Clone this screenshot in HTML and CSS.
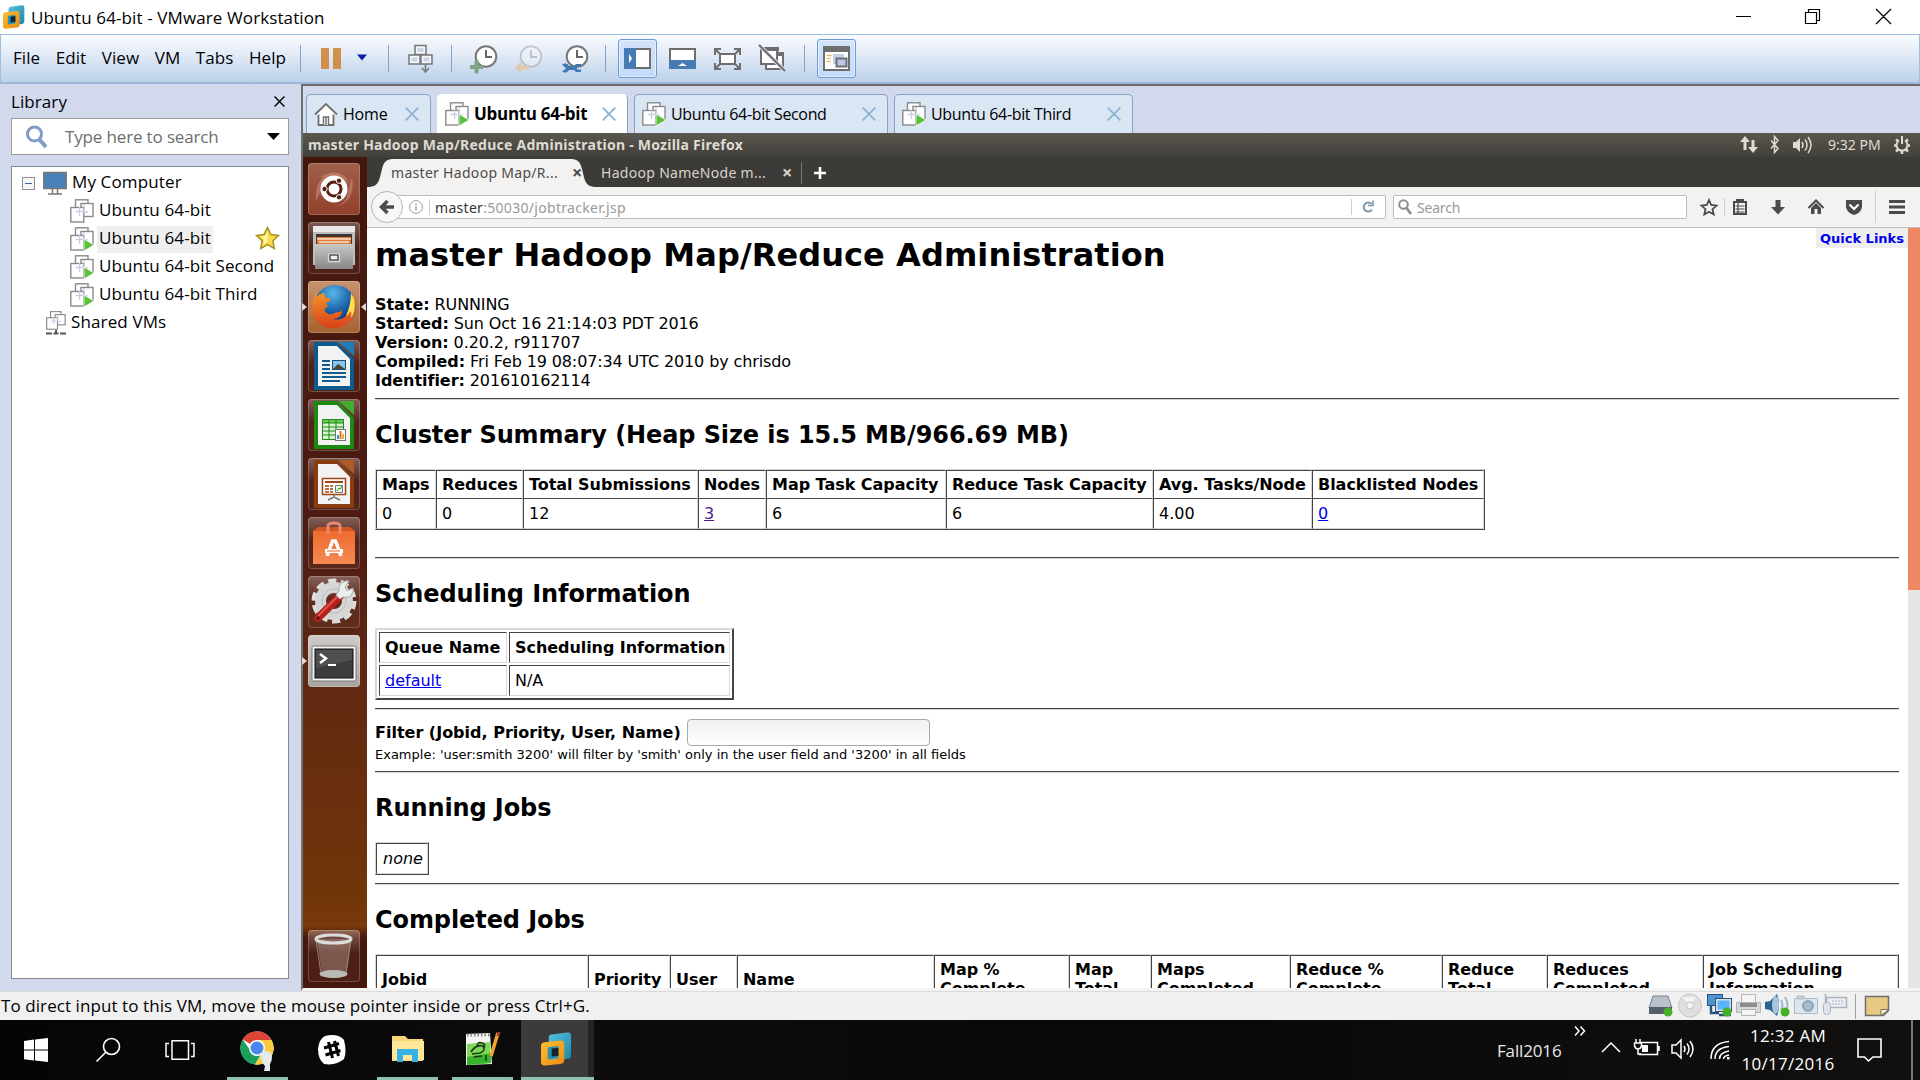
FILE: index.html
```html
<!DOCTYPE html>
<html lang="en">
<head>
<meta charset="utf-8">
<title>Ubuntu 64-bit - VMware Workstation</title>
<link rel="stylesheet" href="styles.css">
</head>
<body>
<svg class="defs" width="0" height="0">
  <defs>
    <linearGradient id="steel" x1="0" y1="0" x2="0" y2="1"><stop offset="0" stop-color="#c9c9c9"/><stop offset="1" stop-color="#868686"/></linearGradient>
    <linearGradient id="bag" x1="0" y1="0" x2="0" y2="1"><stop offset="0" stop-color="#ee6a2c"/><stop offset="1" stop-color="#f58a55"/></linearGradient>
    <linearGradient id="cyan" x1="0" y1="0" x2="1" y2="1"><stop offset="0" stop-color="#55c3e0"/><stop offset="1" stop-color="#1e86a8"/></linearGradient>
    <linearGradient id="amber" x1="0" y1="0" x2="1" y2="1"><stop offset="0" stop-color="#fdc02f"/><stop offset="1" stop-color="#ee8a15"/></linearGradient>
    <radialGradient id="globe" cx=".45" cy=".2" r=".8"><stop offset="0" stop-color="#56b6e8"/><stop offset=".6" stop-color="#15569d"/><stop offset="1" stop-color="#0b2d66"/></radialGradient>
    <linearGradient id="fox" x1="0" y1="0" x2="0" y2="1"><stop offset="0" stop-color="#f5952a"/><stop offset="1" stop-color="#d9401a"/></linearGradient>
    <symbol id="vmware" viewBox="0 0 32 40">
      <path d="M11 3 27 .500Q31 0 31 4V27Q31 31 28 31.500L12 34Q8 34 8 30V7Q8 3.500 11 3z" fill="url(#cyan)"/>
      <path d="M4 12 20 10Q24 10 24 14V33Q24 37 20 37.500L4 39.500Q0 39.500 0 36V16Q0 12.500 4 12z" fill="url(#amber)"/>
      <path d="M7 18 18 16.500V31L7 32.500z" fill="#2a93b4"/><path d="M11 19.500 18 18.500V28l-7 1z" fill="#12252c"/>
    </symbol>
    <symbol id="vm" viewBox="0 0 24 24">
      <g fill="#fff" stroke="#8a8a8a" stroke-width="1.400"><rect x="5.500" y=".8" width="12.500" height="14"/><rect x="11" y="4.500" width="12" height="13"/><rect x=".8" y="8.500" width="13" height="14.500"/></g>
      <path d="M5.500 12.500h8M9.500 8v9M14 5v8h4" fill="none" stroke="#c3d0e6" stroke-width="1.300"/>
    </symbol>
    <symbol id="vmrun" viewBox="0 0 24 24"><use href="#vm"/><path d="M14 12l10 6-10 6z" fill="#5bbf3c" stroke="#fff" stroke-width=".8"/></symbol>
    <symbol id="x" viewBox="0 0 14 14"><path d="M.7.7l12.600 12.600M13.300.7.7 13.300" fill="none" stroke="currentColor" stroke-width="1.800"/></symbol>
    <symbol id="clock" viewBox="0 0 28 28"><circle cx="16" cy="11.500" r="10.300" fill="#fff" stroke="#777" stroke-width="2"/><path d="M16 5v7h6" fill="none" stroke="#666" stroke-width="2"/></symbol>
  </defs>
</svg>

<header class="titlebar">
  <svg class="appicon" width="22" height="24" viewBox="0 0 32 40" preserveAspectRatio="none"><use href="#vmware" width="32" height="40"/></svg>
  <span class="ui title">Ubuntu 64-bit - VMware Workstation</span>
  <svg class="winctl" width="160" height="34" fill="none" stroke="#000" stroke-width="1.200"><path d="M1 16.500h15M70.500 12.500h11v11h-11zM73.500 12.500v-3h11v11h-3M141 9l15 15M156 9l-15 15"/></svg>
</header>

<div class="toolbar ui">
  <nav class="menus"><span>File</span><span>Edit</span><span>View</span><span>VM</span><span>Tabs</span><span>Help</span></nav>
  <i class="sep"></i>
  <svg width="48" height="40" style="margin-left:19px"><path d="M1 9h8v21H1zM13 9h8v21h-8z" fill="#d2914b"/><path d="M37 15.500h10l-5 6z" fill="#0a1fa8"/></svg>
  <i class="sep" style="margin-left:20px"></i>
  <svg width="25" height="40" style="margin-left:19px" fill="#f4f7fd" stroke="#7b7b7b" stroke-width="1.600"><rect x="7" y="6.500" width="11" height="9"/><rect x="1" y="16" width="11" height="9"/><rect x="13" y="16" width="11" height="9"/><path d="M17.500 25v7M14 29l3.500 4 3.500-4" fill="none"/><path d="M9.500 9h6v4h-6zM3.500 18.500h6v4h-6zM15.500 18.500h6v4h-6z" fill="#c9d6ea" stroke="none"/></svg>
  <i class="sep" style="margin-left:18px"></i>
  <svg width="28" height="28" style="margin-left:18px"><use href="#clock"/><path d="M0 22h13M6.500 15.500v13" stroke="#83a389" stroke-width="4"/></svg>
  <svg width="28" height="28" style="margin-left:17px"><use href="#clock" opacity=".3"/><path d="M0 22.500 6 17v3.500h8v4H6V28z" fill="#e0c8ae"/></svg>
  <svg width="28" height="28" style="margin-left:18px"><use href="#clock"/><path d="M1 19.500a4.500 4.500 0 0 1 7 1.500h5l2-2h5v2.500h-4v3h4V27h-5l-2-2H8a4.500 4.500 0 0 1-7 1.500l4-3z" fill="#3f78b5"/></svg>
  <i class="sep" style="margin-left:16px"></i>
  <span class="pressed" style="margin-left:12px"><svg width="27" height="21"><rect x="1" y="1" width="25" height="19" fill="#fff" stroke="#6e6e6e" stroke-width="2"/><path d="M0 0h12v21H0z" fill="#467bb3"/><path d="M5 6l3 4.500L5 15z" fill="#fff"/></svg></span>
  <svg width="27" height="21" style="margin-left:12px"><rect x="1" y="1" width="25" height="19" fill="#fff" stroke="#6e6e6e" stroke-width="2"/><path d="M0 12h27v9H0z" fill="#467bb3"/><path d="M9 18l4.500-3 4.500 3z" fill="#fff"/></svg>
  <svg width="27" height="22" style="margin-left:18px" fill="none" stroke="#6e6e6e" stroke-width="2"><rect x="6" y="6" width="15" height="10" fill="#fff"/><path d="M1 7V1h6M20 1h6v6M26 15v6h-6M7 21H1v-6M1 1l5 5M26 1l-5 5M26 21l-5-5M1 21l5-5"/></svg>
  <svg width="27" height="27" style="margin-left:18px" fill="#fff" stroke="#6e6e6e" stroke-width="2"><path d="M7 8h17v16H7z"/><path d="M2 5h16v14H2z"/><path d="M2 2h18v4H2zM18 7h7v4h-7z" fill="#6e6e6e" stroke="none"/><path d="M0 0l26 26" stroke="#dfe7f5" stroke-width="4"/><path d="M0 0l26 26" stroke-width="2"/></svg>
  <i class="sep" style="margin-left:18px"></i>
  <span class="pressed" style="margin-left:12px"><svg width="27" height="25"><rect x="1" y="1" width="25" height="23" fill="#fff" stroke="#6e6e6e" stroke-width="2"/><path d="M0 0h27v6H0z" fill="#6e6e6e"/><path d="M3.500 9.500h5M3.500 12.500h4M3.500 15.500h4" stroke="#e4bd6c" stroke-width="1.500"/><path d="M10 8h11v10H10z" fill="#c3d0ea"/><path d="M13.500 12.500h10v8h-10z" fill="#b9c8e6" stroke="#6e6e6e" stroke-width="2"/></svg></span>
</div>

<main class="workspace">
  <aside class="library ui">
    <div class="libhead"><span>Library</span><svg width="11" height="11"><use href="#x"/></svg></div>
    <div class="searchbox">
      <svg width="24" height="24" fill="none" stroke="#7f9bc6"><circle cx="9.500" cy="9" r="7" stroke-width="3"/><path d="M14 14l7 8" stroke-width="4"/></svg>
      <span>Type here to search</span>
      <svg width="13" height="8"><path d="M0 0h13L6.500 7z"/></svg>
    </div>
    <div class="tree">
      <div class="node"><svg width="13" height="13" class="expander"><rect x=".5" y=".5" width="12" height="12" fill="#f7f7f7" stroke="#8f8f8f"/><path d="M3 6.500h7" stroke="#3f5fa8"/></svg>
        <svg width="24" height="24"><rect x=".8" y="1.500" width="22.400" height="16" fill="#4a80b8" stroke="#777" stroke-width="1.500"/><path d="M9.500 18v5M14.500 18v5M5 23h14" stroke="#777" stroke-width="1.500"/></svg><span>My Computer</span></div>
      <div class="node child"><svg width="24" height="24"><use href="#vm"/></svg><span>Ubuntu 64-bit</span></div>
      <div class="node child picked"><svg width="24" height="24"><use href="#vmrun"/></svg><span>Ubuntu 64-bit</span>
        <svg class="star" width="25" height="24"><path d="M12.500 1.500l3.400 7 7.600 1-5.600 5.300 1.400 7.700-6.800-3.800-6.800 3.800 1.400-7.700L1.500 9.500l7.600-1z" fill="#f6de4b" stroke="#a98f20" stroke-width="1.500"/><path d="M12.500 5v11l-4 2.500 1-5L6 10.500l4.500-.8z" fill="#fff7ae"/></svg></div>
      <div class="node child"><svg width="24" height="24"><use href="#vmrun"/></svg><span>Ubuntu 64-bit Second</span></div>
      <div class="node child"><svg width="24" height="24"><use href="#vmrun"/></svg><span>Ubuntu 64-bit Third</span></div>
      <div class="node shared"><svg width="20" height="24"><svg width="20" height="19" preserveAspectRatio="none" viewBox="0 0 24 24"><use href="#vm" width="24" height="24"/></svg><path d="M10 19v3M0 22.500h6M7.500 22.500h5M14 22.500h6" stroke="#555" stroke-width="2"/></svg><span>Shared VMs</span></div>
    </div>
  </aside>

  <section class="console">
    <div class="vmtabs ui">
      <div class="vmtab home"><svg width="24" height="24" fill="#fff" stroke="#6e6e6e" stroke-width="1.800"><path d="M4.500 12v11h15V12"/><path d="M1 12.500 12 2l11 10.500"/><path d="M9.500 23v-8h5v8M12 15v8" stroke-width="1.400"/></svg><span>Home</span><svg class="close" width="14" height="14"><use href="#x"/></svg></div>
      <div class="vmtab active"><svg width="24" height="24"><use href="#vmrun"/></svg><span>Ubuntu 64-bit</span><svg class="close" width="14" height="14"><use href="#x"/></svg></div>
      <div class="vmtab second"><svg width="24" height="24"><use href="#vmrun"/></svg><span>Ubuntu 64-bit Second</span><svg class="close" width="14" height="14"><use href="#x"/></svg></div>
      <div class="vmtab third"><svg width="24" height="24"><use href="#vmrun"/></svg><span>Ubuntu 64-bit Third</span><svg class="close" width="14" height="14"><use href="#x"/></svg></div>
    </div>

    <div class="panel ubuntu">
      <span class="wintitle">master Hadoop Map/Reduce Administration - Mozilla Firefox</span>
      <svg width="76" height="22" fill="none" stroke="#dfdbd2" stroke-width="1.500"><path d="M5 16V6M13 6v9" stroke-width="3"/><path d="M0 8l5-6 5 6zM8 13l5 6 5-6z" fill="#dfdbd2" stroke="none"/><path d="M31 6.500l7 8-3.500 4v-16l3.500 4-7 8"/><path d="M53 8v6h3l4 4V4l-4 4z" fill="#dfdbd2" stroke="none"/><path d="M62 8q2 3 0 6M65 5.500q4 5.500 0 11M68 3q6 8 0 16"/></svg>
      <span class="time">9:32 PM</span>
      <svg class="gear" width="18" height="18" fill="none" stroke="#dfdbd2"><path d="M6 4.500a5.500 5.500 0 1 0 6 0" stroke-width="2"/><path d="M9 0v8" stroke-width="2"/><path d="M1 9.500h2M15 9.500h2M9 15v3M3 3.500l2 1.500M15 3.500 13 5M3 15.500l2-2M15 15.500l-2-2" stroke-width="2.500"/></svg>
    </div>

    <div class="desktop">
      <div class="launcher">
        <div class="tile dash"><svg width="52" height="52"><path d="M8 38Q6 12 28 10 14 14 14 26M44 14Q48 40 26 44 40 40 40 28M12 14Q34 2 42 22 34 12 26 13" fill="#d9a08a" opacity=".45"/><circle cx="26" cy="26" r="13.500" fill="#fff"/><circle cx="26" cy="26" r="7" fill="none" stroke="#5a1f12" stroke-width="3"/><g fill="#5a1f12" stroke="#fff" stroke-width="1"><circle cx="16.500" cy="26" r="2.700"/><circle cx="31" cy="17.700" r="2.700"/><circle cx="31" cy="34.300" r="2.700"/></g></svg></div>
        <div class="tile"><svg width="52" height="52"><path d="M5 4h42v39H5z" fill="#bdbdbd"/><path d="M5 4h42v6H5z" fill="#e9e9e9"/><path d="M8 12h36v12H8z" fill="#3c3532"/><path d="M9 15h34v8H9z" fill="#e07a3c"/><path d="M9 17h34M11 20h30" stroke="#f8e2c8" stroke-width="1.500"/><path d="M7 22h38v25H7z" fill="url(#steel)"/><rect x="19.500" y="30.500" width="13" height="10" rx="2" fill="#d8d8d8" stroke="#a9a9a9"/><rect x="22" y="33" width="8" height="5" fill="#eee" stroke="#333" stroke-width="1.200"/></svg></div>
        <div class="tile ff run front"><svg width="52" height="52"><circle cx="27" cy="25" r="21" fill="url(#globe)"/><path d="M45 13c4 8 4 18-2 26-5 6-13 9-20 8C11 46 4 37 4 26c0-6 2-11 5-15v5c2-3 5-4 8-4-1 2 0 4 1 5h4c1 2-1 4-4 5l2 4c-3 0-4 2-3 4 2 4 8 4 11 1 4 1 5-1 6-2 1 5-4 9-9 9 12 3 20-7 20-25z" fill="url(#fox)"/><path d="M43 12c5 8 5 18 0 25 1-5 0-6-1-7-1 3-2 4-4 5 3-7 5-14 5-23z" fill="#fde04a"/></svg></div>
        <div class="tile"><svg width="52" height="52"><path d="M6 2h23l17 17v31H6z" fill="#0d5a8c"/><path d="M31 2h15v14z" fill="#1f7db8"/><path d="M10 6h19l13 13v27H10z" fill="#f2f2f2"/><path d="M14 21h8M14 25h8M14 29h8M14 33h24M14 37h24M14 41h18" stroke="#0f5c8e" stroke-width="2"/><rect x="24.500" y="20.500" width="13" height="9" fill="#8cc4ea" stroke="#0f4f7b"/><path d="M25 29l5-5 3 2 4 3z" fill="#4c4330"/></svg></div>
        <div class="tile"><svg width="52" height="52"><path d="M6 2h23l17 17v31H6z" fill="#1c8a10"/><path d="M31 2h15v14z" fill="#3fae2a"/><path d="M10 6h19l13 13v27H10z" fill="#f2f2f2"/><path d="M14 20h22v20H14z" fill="#d9f2cf"/><path d="M14 20h22v4H14z" fill="#6cc95a"/><path d="M14.500 20.500h21v20h-21zM14 24h22M14 28h22M14 32h22M14 36h22M21 20v20M28 20v20" stroke="#218a18" fill="none"/><rect x="27.500" y="30.500" width="10" height="11" fill="#fff" stroke="#777"/><path d="M30 40v-4" stroke="#3a8fd8" stroke-width="2"/><path d="M32.500 40v-8" stroke="#e8722c" stroke-width="2"/><path d="M35 40v-5" stroke="#e3b62f" stroke-width="2"/></svg></div>
        <div class="tile"><svg width="52" height="52"><path d="M6 2h23l17 17v31H6z" fill="#8a3c10"/><path d="M31 2h15v14z" fill="#b05a24"/><path d="M10 6h19l13 13v27H10z" fill="#f2f2f2"/><rect x="14.500" y="20.500" width="23" height="16" fill="#fff" stroke="#a04412" stroke-width="1.500"/><path d="M17 24h18" stroke="#a04412" stroke-width="2"/><path d="M17 28h4M17 31h4M17 34h4M22 28h3M22 31h3M22 34h3" stroke="#a04412" stroke-width="1.500"/><path d="M27.500 27.500h7v7h-7z" fill="#e8f5e4" stroke="#777"/><path d="M29 33l2-3 1 1 2-3" fill="none" stroke="#2a9a2a"/><path d="M26 37v3M20 42l6-3 6 3" stroke="#777" stroke-width="1.500" fill="none"/></svg></div>
        <div class="tile"><svg width="52" height="52"><path d="M5 14h42v33H5z" fill="url(#bag)"/><path d="M5 14l5-4h32l5 4z" fill="#d1561f"/><path d="M20 17V9q0-3 6-3t6 3v8" fill="none" stroke="#e9886a" stroke-width="3"/><path d="M19 39l5.500-15h3L33 39" fill="none" stroke="#fff" stroke-width="3.500"/><path d="M17 34h18" stroke="#fff" stroke-width="4"/><path d="M19 34h13" stroke="#ef7a40" stroke-width="1.200"/></svg></div>
        <div class="tile"><svg width="52" height="52"><circle cx="26" cy="25" r="20" fill="none" stroke="#dcdcdc" stroke-width="5" stroke-dasharray="8 4.560"/><circle cx="26" cy="25" r="13.500" fill="none" stroke="#d6d6d6" stroke-width="11"/><circle cx="26" cy="25" r="12" fill="none" stroke="#bcbcbc"/><path d="M10 42 33 19" stroke="#b4201e" stroke-width="8" stroke-linecap="round"/><path d="M10 40 32 18" stroke="#e0524a" stroke-width="2"/><circle cx="10" cy="42" r="1.500" fill="#4d0c0c"/><path d="M31 15c-1-6 4-11 10-10l-4 6 2 4 6-3c1 6-4 11-10 9l-3 2-4-4z" fill="#eee" stroke="#aaa"/></svg></div>
        <div class="tile term run"><svg width="52" height="52"><rect x="4" y="11" width="44" height="35" rx="1.500" fill="#f3f3f3" stroke="#777"/><rect x="7" y="14" width="38" height="29" fill="#3c3c3c" stroke="#111"/><path d="M8 15h36v10L8 33z" fill="#5b5b5b" opacity=".6"/><path d="M12 19l6 4.500-6 4.500" fill="none" stroke="#fff" stroke-width="2.500"/><path d="M20 30h8" stroke="#fff" stroke-width="2"/></svg></div>
        <div class="tile trash"><svg width="52" height="52"><path d="M9 9h34l-5 36q-12 5-24 0z" fill="#c9b0a6" opacity=".38"/><ellipse cx="25.500" cy="44" rx="14" ry="4" fill="#bcbab4"/><ellipse cx="25.500" cy="9" rx="17.500" ry="4" fill="none" stroke="#dcdcda" stroke-width="3"/><path d="M8 10l5 34M43 10l-5 34" stroke="#c7b8b2" opacity=".6"/></svg></div>
      </div>

      <div class="firefox">
        <div class="fftabs ubuntu">
          <svg class="tabshape" width="230" height="30"><path d="M0 30C12 30 12 24 15 12 17 4 20 2 27 2H203C210 2 213 4 215 12 218 24 218 30 230 30z" fill="#f3f2f1"/></svg>
          <span class="t1">master Hadoop Map/R...</span><b class="c1">×</b>
          <span class="t2">Hadoop NameNode m...</span><b class="c2">×</b><i></i>
          <svg width="14" height="14"><path d="M7 1v12M1 7h12" stroke="#fff" stroke-width="2.600"/></svg>
        </div>
        <div class="ffnav ubuntu">
          <svg class="back" width="34" height="34"><circle cx="17" cy="17" r="15.500" fill="#f8f7f6" stroke="#b9b7b5"/><path d="M24 17H12M17.500 11l-6 6 6 6" fill="none" stroke="#4c4c4c" stroke-width="3.500"/></svg>
          <div class="url"><svg width="14" height="14" fill="none" stroke="#999"><circle cx="7" cy="7" r="6.400"/><path d="M7 6v4.500M7 3.500v1.400" stroke-width="1.400"/></svg><i></i><span><em>master</em>:50030/jobtracker.jsp</span><i class="rsep"></i><svg width="12" height="14" fill="none" stroke="#8297a8" stroke-width="2"><path d="M9.500 4A4.500 4.500 0 1 0 10 9.500"/><path d="M6 5.500h5V.5" stroke-width="1.600"/></svg></div>
          <div class="ffsearch"><svg width="14" height="17" fill="none" stroke="#8c8c8c"><circle cx="5.500" cy="5.500" r="4.300" stroke-width="2"/><path d="M8.500 9l4.500 6" stroke-width="2.600"/></svg><span>Search</span></div>
          <svg class="ffbtns" width="206" height="36" fill="none" stroke="#4a4a4a"><path d="M9 11l2.200 5 5.300.6-4 3.600 1.200 5.300L9 22.800l-4.700 2.700 1.200-5.300-4-3.600 5.300-.6z" stroke-width="1.800"/><path d="M24.500 9v18M175.500 2v32" stroke="#d0cecc"/><path d="M34 13h12v12H34z" stroke-width="2"/><path d="M36 10h8v4h-8z" fill="#4a4a4a" stroke="none"/><path d="M35.500 17h9M35.500 20h9M35.500 23h9M38 14v10" stroke-width="1.200"/><path d="M78 11v8" stroke-width="5"/><path d="M71 18h14l-7 7.500z" fill="#4a4a4a" stroke="none"/><path d="M108.500 19l7.500-7.500 7.500 7.500" stroke-width="2"/><path d="M111 19l5-5 5 5v6h-3.500v-5h-3v5H111z" fill="#4a4a4a" stroke="none"/><path d="M146 11h16v7q-1 6-8 8-7-2-8-8z" fill="#4a4a4a" stroke="none"/><path d="M149.500 15.500l4.500 4.500 4.500-4.500" stroke="#fff" stroke-width="2.200"/><path d="M189 12.500h16M189 18h16M189 23.500h16" stroke-width="2.800"/></svg>
        </div>

        <div class="viewport">
          <div class="page">
            <a class="quick">Quick Links</a>
            <h1>master Hadoop Map/Reduce Administration</h1>
            <div class="facts"><b>State:</b> RUNNING<br><b>Started:</b> Sun Oct 16 21:14:03 PDT 2016<br><b>Version:</b> 0.20.2, r911707<br><b>Compiled:</b> Fri Feb 19 08:07:34 UTC 2010 by chrisdo<br><b>Identifier:</b> 201610162114</div>
            <hr>
            <h2>Cluster Summary (Heap Size is 15.5 MB/966.69 MB)</h2>
            <table class="cluster">
              <colgroup><col class="w60"><col class="w87"><col class="w175"><col class="w68"><col class="w180"><col class="w207"><col class="w159"><col class="w172"></colgroup>
              <tr><th>Maps</th><th>Reduces</th><th>Total Submissions</th><th>Nodes</th><th>Map Task Capacity</th><th>Reduce Task Capacity</th><th>Avg. Tasks/Node</th><th>Blacklisted Nodes</th></tr>
              <tr><td>0</td><td>0</td><td>12</td><td><a class="visited">3</a></td><td>6</td><td>6</td><td>4.00</td><td><a>0</a></td></tr>
            </table>
            <hr class="after-cluster">
            <h2>Scheduling Information</h2>
            <table class="queues">
              <tr><th>Queue Name</th><th>Scheduling Information</th></tr>
              <tr><td><a>default</a></td><td>N/A</td></tr>
            </table>
            <hr>
            <div class="filter"><b>Filter (Jobid, Priority, User, Name)</b><input type="text"></div>
            <div class="example">Example: 'user:smith 3200' will filter by 'smith' only in the user field and '3200' in all fields</div>
            <hr>
            <h2>Running Jobs</h2>
            <table class="none"><tr><td><i>none</i></td></tr></table>
            <hr>
            <h2>Completed Jobs</h2>
            <table class="jobs">
              <colgroup><col class="w212"><col class="w82"><col class="w67"><col class="w197"><col class="w135"><col class="w82"><col class="w139"><col class="w152"><col class="w105"><col class="w156"><col class="w195"></colgroup>
              <tr><td>Jobid</td><td>Priority</td><td>User</td><td>Name</td><td>Map % Complete</td><td>Map Total</td><td>Maps Completed</td><td>Reduce % Complete</td><td>Reduce Total</td><td>Reduces Completed</td><td>Job Scheduling Information</td></tr>
            </table>
          </div>
          <div class="scroll"><div></div></div>
        </div>
      </div>
    </div>
  </section>
</main>

<footer class="status ui">
  <span>To direct input to this VM, move the mouse pointer inside or press Ctrl+G.</span>
  <svg width="242" height="27">
    <g><path d="M5 3h15l4 12H1z" fill="#b9c2cc" stroke="#77828e"/><path d="M1 14h23v7H1z" fill="#56606b"/><circle cx="20" cy="19" r="4.500" fill="#45b028"/></g>
    <g><circle cx="42" cy="12.500" r="11.500" fill="#dedee1" stroke="#c6c6cb"/><path d="M42 12.500 34 4h14z" fill="#f3f3f4"/><circle cx="42" cy="12.500" r="3.500" fill="#f4f4f4" stroke="#c4c4c8"/></g>
    <g stroke="#24557f"><rect x="59.500" y="1.500" width="15" height="11" fill="#4f94cf"/><rect x="68.500" y="6.500" width="14" height="11" fill="#5bb2ff" stroke="#ddd" stroke-width="2"/><rect x="67.500" y="5.500" width="16" height="13" fill="none"/><path d="M63 13v7h8M71 22h12" fill="none" stroke-width="2.500"/></g><circle cx="79" cy="19" r="4.500" fill="#45b028"/>
    <g stroke="#b4b4b8"><path d="M93.500 1.500h14v9h-14z" fill="#f4f4f4"/><path d="M88.500 9.500h24v10h-24z" fill="#d7d7da"/><path d="M92 10h17v4H92z" fill="#8d8d90" stroke="none"/><path d="M93.500 16.500h14v6h-14z" fill="#f4f4f4"/></g>
    <g><path d="M117 9l5-1 7-7q4 11 0 22l-7-6-5-1z" fill="#2f6294"/><ellipse cx="127.500" cy="12" rx="3.500" ry="9" fill="#a8c5e0"/><path d="M133 7q3 5 0 10M137 4q5 8 0 16" fill="none" stroke="#a6b8cf" stroke-width="2"/><circle cx="137" cy="19" r="4.500" fill="#45b028"/></g>
    <g stroke="#a9bccb"><path d="M146.500 5.500h23v15h-23z" fill="#dbe6ee"/><path d="M149 3h7v3h-7z" fill="#c5d3de"/><circle cx="160" cy="13" r="5" fill="#aabdcc" stroke="#8da3b5" stroke-width="2"/></g>
    <g stroke="#aab3bd"><path d="M178.500 4.500h20v10h-20z" fill="#eceff2" stroke-width="1.500"/><path d="M184 8h12M184 11h12" stroke-dasharray="2 1"/><path d="M177.500 1v8" stroke-width="1.500"/><rect x="175.500" y="9.500" width="7" height="12" rx="3" fill="#dfe4ea"/></g>
    <path d="M207.500 1v25" stroke="#a0a0a0"/><path d="M217.500 3.500h23v14l-5 5h-18z" fill="#e7ca80" stroke="#6f6f6f" stroke-width="1.500"/><path d="M233 22.500v-6h8z" fill="#fff1c8" stroke="#6f6f6f"/>
  </svg>
</footer>

<footer class="taskbar">
  <div class="apps">
    <svg class="a1" width="24" height="24" fill="#fff"><path d="M0 3l10-1.400v10H0zM11 1.500 24 0v11.600H11zM0 12.600h10v10L0 21.200zM11 12.600h13V24l-13-1.500z"/></svg>
    <svg class="a2" width="25" height="24" fill="none" stroke="#fff" stroke-width="1.600"><circle cx="15.500" cy="8.500" r="8"/><path d="M10 14 .5 23.500"/></svg>
    <svg class="a3" width="30" height="20" fill="none" stroke="#fff" stroke-width="1.500"><path d="M7 .8h16.500v18.400H7zM4 3.500H1v13h3M26 3.500h3v13h-3"/></svg>
    <div class="app open chrome"><svg width="36" height="38"><circle cx="17" cy="18" r="16.500" fill="#fff"/><path d="M17 18 2.700 9.500A16.500 16.500 0 0 1 31.500 10H17z" fill="#dc4437"/><path d="M2.700 9.500A16.500 16.500 0 0 0 15 34.500l7-12-5-3-8-1z" fill="#1ba05b"/><path d="M17 10h14.500A16.500 16.500 0 0 1 15 34.500l8-12z" fill="#fccb3b"/><circle cx="17" cy="18" r="8" fill="#fff"/><circle cx="17" cy="18" r="6.500" fill="#4a86ee"/><path d="M21 26q0-5 5-5 6 0 6 6 0 4-2 7v7h-6l1-5q-4-4-4-10z" fill="#e4e9ec"/></svg></div>
    <svg class="slack" width="28" height="30"><path d="M7 1Q20-2 26 5q3 12 0 19-8 7-20 5Q0 24 0 14 1 4 7 1z" fill="#fff"/><path d="M10.500 7l4 16M16.500 6l4 15M6 13l15-4.500M7.500 20l15-4.500" stroke="#000" stroke-width="3"/></svg>
    <div class="app open explorer"><svg width="32" height="28"><path d="M0 1h13l3 3h15v22H0z" fill="#f7d675"/><path d="M0 6h32v19H0z" fill="#fde799"/><path d="M5 27V14h21v13h-6v-7h-9v7z" fill="#37b2e6"/></svg></div>
    <div class="app open npp"><svg width="35" height="34"><path d="M1 2 25 1l2 31-26 1z" fill="#f4f4f4"/><path d="M2 12 25 10l1 21-24 2z" fill="#7ed957"/><path d="M2 25l24-4v10L2 33z" fill="#38b52c"/><path d="M2 3h24" stroke="#888" stroke-width="3" stroke-dasharray="1.500 2"/><path d="M6 20q5-8 12-6 3 5-3 7l-8 1M12 14q1-5 5-3 4 1 2 5M9 25l8-1M21 23v6" fill="none" stroke="#21381a" stroke-width="1.600"/><path d="M33 1 26 24" stroke="#f0a62a" stroke-width="3.500"/><path d="M34 0l-1 4" stroke="#a33" stroke-width="3"/></svg></div>
    <div class="app open vmw"><svg width="31" height="34" viewBox="0 0 32 40" preserveAspectRatio="none"><use href="#vmware" width="32" height="40"/></svg></div>
  </div>
  <div class="tray ui">
    <span class="fall">Fall2016</span>
    <svg width="156" height="48" fill="none" stroke="#fff" stroke-width="1.500"><path d="M1 1.500l4 4.500-4 4.500M6.500 1.500l4 4.500-4 4.500"/><path d="M28 27l9-9 9 9"/><path d="M66 17.500h17.500v12H65M85 21v5"/><path d="M68 20h6v7h-6z" fill="#fff" stroke="none"/><path d="M62 14v4M66 14v4M60.500 18h7v3q-1 3-3.500 3t-3.500-3zM64 24v5h3"/><path d="M98 20v8h4l5 5V15l-5 5zM110 21q2 3 0 6M113 18.500q4 5.500 0 11M116 16q6 8 0 16"/><path d="M137 34q0-16 18-17.500M141 34q0-11 14-12.500M145.500 34q0-6.500 9.500-8M149.500 34q0-3 5.500-4"/><path d="M153 32h2.500v2.500H153z" fill="#fff" stroke="none"/></svg>
    <div class="clock"><span>12:32 AM</span><span>10/17/2016</span></div>
    <svg class="note" width="25" height="24" fill="none" stroke="#fff" stroke-width="1.600"><path d="M1 1h23v18h-8l-4.500 4-4-4H1z"/></svg>
    <i class="peek"></i>
  </div>
</footer>
</body>
</html>
```
FILE: styles.css
```css
* { box-sizing: border-box; }
body { margin: 0; width: 1920px; height: 1080px; overflow: hidden; display: flex; flex-direction: column; background: #fff; color: #000; }
svg { display: block; flex: none; overflow: visible; }
span { white-space: nowrap; }
.defs { position: absolute; }
.ui { font: 17px/22px "Open Sans", "Noto Sans", sans-serif; letter-spacing: .08px; }
.ubuntu { font: 14px/18px "Noto Sans", "Open Sans", sans-serif; letter-spacing: .3px; }

.titlebar { height: 34px; flex: none; display: flex; align-items: center; padding-left: 3px; }
.title { letter-spacing: .11px; position: relative; top: 1px; }
.appicon { margin-right: 6px; }
.winctl { margin-left: auto; margin-right: 25px; }

.toolbar { height: 50px; flex: none; display: flex; align-items: center; border: 1px solid #9dbfe0; border-bottom: 2px solid #9cb8dc; background: linear-gradient(#f9fbfe, #e3ebf7 40%, #bcd1ea); }
.menus { width: 299px; display: flex; padding-left: 12px; gap: 15.500px; position: relative; top: -1px; }
.sep { width: 1px; height: 27px; background: #7fa3cf; flex: none; }
.pressed { width: 39px; height: 39px; flex: none; display: flex; align-items: center; justify-content: center; border: 1px solid #6f9bd3; border-radius: 3px; background: linear-gradient(#d3e4f8, #c2dafb); box-shadow: inset 0 0 0 1px #e6f0fd; }

.workspace { height: 907px; flex: none; display: flex; background: #d3d9ed; }
.library { width: 301px; padding: 4px 12px 12px 11px; display: flex; flex-direction: column; }
.libhead { height: 27px; margin-bottom: 3px; display: flex; justify-content: space-between; align-items: center; padding-right: 4px; }
.searchbox { height: 37px; border: 1px solid #9b9b9b; background: #fff; display: flex; align-items: center; padding: 0 8px 0 13px; color: #6d6d6d; letter-spacing: -.15px; }
.searchbox span { margin: 1px auto 0 16px; }
.tree { flex: 1; margin-top: 11px; border: 1px solid #828790; background: #fff; padding-top: 2px; letter-spacing: .13px; }
.node { height: 28px; display: flex; align-items: center; padding-left: 10px; }
.node span { margin-left: 3px; padding: 1px 2px 4px; }
.expander { margin-right: 8px; }
.child { padding-left: 58px; }
.picked span { background: #efefef; }
.shared { padding-left: 34px; }
.star { margin: -2px 8px 0 auto; }

.console { width: 1619px; border-left: 2px solid #727272; border-top: 2px solid #6d6a68; border-bottom: 3px solid #f4f4f4; display: flex; flex-direction: column; }
.vmtabs { height: 47px; flex: none; display: flex; align-items: flex-end; gap: 6px; padding-left: 3px; }
.vmtab { height: 39px; display: flex; align-items: center; border: 1px solid #83a5c8; border-bottom: 0; border-radius: 5px 5px 0 0; background: #dae6f4; padding: 0 11px 0 7px; font-size: 16px; letter-spacing: -.35px; }
.vmtab span { margin-left: 5px; }
.close { margin-left: auto; color: #8eb3d3; }
.home { width: 125px; }
.home span { letter-spacing: -.2px; }
.active { width: 191px; background: #fff; border-color: #fff #83a5c8 #fff #fff; font-size: 17px; font-weight: 700; letter-spacing: -.3px; }
.second { width: 254px; }
.third { width: 239px; }
.panel { height: 24px; flex: none; display: flex; align-items: center; padding-left: 5px; background: linear-gradient(#5a574f, #42403b); color: #dfdbd2; }
.wintitle { font-weight: 700; margin-right: auto; letter-spacing: .25px; }
.time { margin-left: 12px; width: 53px; letter-spacing: 0; }
.gear { margin: 0 9px 0 12px; }

.desktop { flex: 1; display: flex; min-height: 0; }
.launcher { width: 64px; padding: 6px 0 6px 5px; display: flex; flex-direction: column; gap: 7px; background: linear-gradient(#43170e, #4d1b11 45%, #5e2713 60%, #733609 90%, #7a3a0a 92.500%, #46170c 94%); }
.tile { width: 52px; height: 52px; flex: none; border-radius: 4px; position: relative; background: linear-gradient(rgba(255,255,255,.3), rgba(255,255,255,.04) 45%); box-shadow: inset 0 0 0 1px rgba(255,255,255,.2); }
.dash { background: linear-gradient(#a0604c, #91402a); }
.ff { background: linear-gradient(#c79370, #a5622f); }
.term { background: linear-gradient(#cfcbc8, #a8a4a2); }
.trash { margin-top: auto; }
.run::before, .front::after { content: ""; position: absolute; top: 22px; left: -6px; border: 4px solid transparent; border-left: 5px solid #dcdcdc; border-right: 0; }
.front::after { left: auto; right: -6px; border-right: 5px solid #dcdcdc; border-left: 0; }

.firefox { width: 1553px; display: flex; flex-direction: column; }
.fftabs { height: 30px; flex: none; background: #3c3b37; display: flex; align-items: center; position: relative; color: #d8d4cb; padding-top: 2px; }
.tabshape { position: absolute; left: 0; top: 0; }
.t1 { position: relative; color: #4c4c4c; margin-left: 24px; width: 181px; }
.fftabs b { font-size: 18px; width: 12px; position: relative; top: -1px; }
.fftabs .c1 { color: #4c4c4c; }
.t2 { margin-left: 17px; width: 181px; }
.fftabs i { width: 1px; height: 22px; background: #777; margin: 0 11px 0 7px; }
.ffnav { height: 41px; flex: none; display: flex; align-items: center; background: #f3f2f1; border-bottom: 1px solid #c0bebc; color: #999; }
.back { margin-left: 3px; position: relative; z-index: 1; }
.url { width: 999px; height: 24px; margin-left: -17px; background: #fff; border: 1px solid #bfbdbb; border-radius: 2px; display: flex; align-items: center; padding: 0 11px 0 21px; }
.url span { padding-top: 1px; }
.url i { width: 1px; height: 16px; background: #d0d0d0; margin: 0 5px 0 6px; }
.url .rsep { margin: 0 10px 0 auto; }
.url em { font-style: normal; color: #333; }
.ffsearch { width: 294px; height: 24px; margin-left: 7px; background: #fff; border: 1px solid #bfbdbb; border-radius: 2px; display: flex; align-items: center; padding-left: 4px; letter-spacing: -.2px; }
.ffsearch span { margin-left: 5px; padding-top: 1px; }
.ffbtns { margin-left: 13px; }

.viewport { flex: 1; min-height: 0; display: flex; background: #fff; }
.page { width: 1541px; overflow: hidden; padding: 0 9px 0 8px; position: relative; font: 16px/19px "DejaVu Sans", sans-serif; letter-spacing: 0; }
.quick { position: absolute; right: 0; top: 0; height: 20px; padding: 0 4px; background: #eee; font: 700 13px/21px "DejaVu Sans", sans-serif; }
.scroll { width: 12px; background: #e6e6e6; }
.scroll div { height: 362px; background: #f08763; }
h1 { font-size: 32px; line-height: 38px; margin: 8px 0 21px; letter-spacing: .08px; }
h2 { font-size: 24px; line-height: 28px; margin: 21px 0 20px; letter-spacing: -.09px; }
hr { border: 0; height: 2px; background: #444; border-bottom: 1px solid #d8d8d8; margin: 8px 0; }
.facts { letter-spacing: -.12px; }
.facts b { letter-spacing: -.05px; }
.page a { color: #00e; text-decoration: underline; }
.page .quick { text-decoration: none; }
.page .visited { color: #551a8b; }
table { border: 1px solid; border-color: #d8d8d8 #444 #444 #d8d8d8; border-spacing: 0; table-layout: fixed; }
td, th { border: 1px solid; border-color: #444 #d8d8d8 #d8d8d8 #444; padding: 0 5px; text-align: left; white-space: nowrap; }
.cluster { width: 1110px; height: 61px; }
.cluster tr:first-child { height: 28px; }
.cluster th { border-bottom: 0; letter-spacing: -.03px; }
.after-cluster { margin-top: 27px; }
.queues { border-width: 2px; border-spacing: 2px; width: 359px; height: 72px; }
.queues th { letter-spacing: -.06px; }
.queues th:first-child { width: 128px; letter-spacing: 0; }
.filter { height: 29px; display: flex; align-items: center; margin-top: 8px; }
.filter input { width: 243px; height: 27px; margin: 0 0 0 6px; border: 1px solid #a9a9a9; border-radius: 4px; background: linear-gradient(#f1f1f1, #fff); }
.example { font-size: 13px; line-height: 16px; }
.none { height: 33px; width: 54px; }
.none td { padding: 0 6px; }
.jobs { width: 1524px; height: 50px; font-weight: 700; letter-spacing: -.03px; }
.jobs td { white-space: normal; padding: 4px 5px 5px; }
.w60 { width: 60px; } .w87 { width: 87px; } .w175 { width: 175px; } .w68 { width: 68px; } .w180 { width: 180px; } .w207 { width: 207px; } .w159 { width: 159px; } .w172 { width: 172px; }
.w212 { width: 212px; } .w82 { width: 82px; } .w67 { width: 67px; } .w197 { width: 197px; } .w135 { width: 135px; } .w139 { width: 139px; } .w152 { width: 152px; } .w105 { width: 105px; } .w156 { width: 156px; } .w195 { width: 195px; }

.status { height: 29px; flex: none; background: #f0f0f0; border-top: 1px solid #dadada; display: flex; align-items: center; justify-content: space-between; padding: 0 30px 0 1px; }
.taskbar { height: 60px; flex: none; background: linear-gradient(90deg, #050507, #0d0c0b 30%, #080808 60%, #11100f); display: flex; justify-content: space-between; color: #fff; }
.apps { display: flex; align-items: center; padding-left: 24px; }
.a2 { margin-left: 48px; }
.a3 { margin-left: 44px; }
.app { width: 61px; height: 60px; display: flex; align-items: center; justify-content: center; border-bottom: 3px solid #8fc1b0; }
.chrome { margin-left: 32px; }
.slack { margin-left: 30px; }
.explorer { margin-left: 31px; }
.npp { margin-left: 14px; }
.vmw { margin-left: 8px; width: 73px; background: #3d3a3b; box-shadow: inset -6px 0 #262424; padding-right: 2px; }
.tray { display: flex; align-items: center; }
.fall { width: 66px; color: #e8e8e8; letter-spacing: -.15px; padding-top: 1px; }
.tray > svg:nth-of-type(1) { margin-left: 11px; margin-bottom: 2px; }
.clock { width: 106px; display: flex; flex-direction: column; align-items: center; gap: 6px; padding-left: 10px; letter-spacing: .3px; }
.tray > .note { margin-left: 21px; }
.peek { width: 2px; height: 60px; background: #777; margin: 0 7px 0 29px; }
```
